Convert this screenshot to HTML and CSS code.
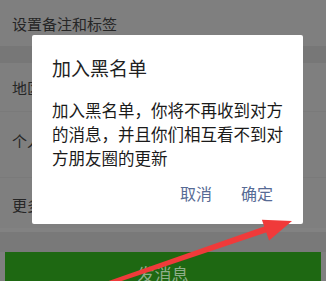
FILE: index.html
```html
<!DOCTYPE html>
<html lang="zh">
<head>
<meta charset="utf-8">
<link rel="stylesheet" href="styles.css">
</head>
<body>
<div class="screen">
  <div class="row row-top">设置备注和标签</div>
  <div class="band band-1"></div>
  <div class="row row-region">地区</div>
  <div class="row row-album">个人相册</div>
  <div class="row row-more">更多</div>
  <div class="band band-2"></div>
  <div class="send">发消息</div>

  <div class="dialog">
    <div class="dialog-title">加入黑名单</div>
    <div class="dialog-body">加入黑名单，你将不再收到对方的消息，并且你们相互看不到对方朋友圈的更新</div>
    <div class="dialog-actions">
      <span class="btn">取消</span>
      <span class="btn">确定</span>
    </div>
  </div>

  <svg class="arrow" viewBox="0 0 326 281" width="326" height="281">
    <polygon points="99.2,284.3 267.0,225.6 269.0,231.4 100.6,288.1" fill="#f03a3a"/>
    <polygon points="292,221 261.9,219.7 269.1,240.5" fill="#f03a3a"/>
  </svg>
</div>
</body>
</html>
```

FILE: styles.css
```css
html, body {
  margin: 0;
  padding: 0;
}
body {
  width: 326px;
  height: 281px;
  overflow: hidden;
  background: #7f7f7f;
  font-family: "Noto Sans CJK SC", "Noto Sans", sans-serif;
}
.screen {
  position: relative;
  width: 326px;
  height: 281px;
  overflow: hidden;
  display: flex;
  flex-direction: column;
  background: #7f7f7f;
}
.row {
  flex: none;
  padding-left: 12px;
  font-size: 15px;
  color: #262626;
  display: flex;
  align-items: center;
  box-sizing: border-box;
  border-bottom: 1px solid #7a7a7a;
}
.row-top {
  height: 46px;
  border-bottom: none;
}
.band {
  flex: none;
  background: #777777;
}
.band-1 {
  height: 17px;
}
.row-region {
  height: 49px;
  padding-top: 1px;
}
.row-album {
  height: 66px;
  align-items: flex-start;
  padding-top: 18px;
}
.row-more {
  height: 50px;
  padding-top: 2px;
  border-bottom: none;
}
.band-2 {
  height: 20px;
  background: #797979;
  border-top: 4px solid #828282;
}
.send {
  flex: none;
  margin: 0 5px;
  height: 40px;
  background: #1e6812;
  color: #8fae8a;
  font-size: 17px;
  display: flex;
  justify-content: center;
  align-items: flex-start;
  padding-top: 9px;
  box-sizing: border-box;
}
.dialog {
  position: absolute;
  left: 32px;
  top: 35px;
  width: 271px;
  height: 189px;
  background: #ffffff;
  border-radius: 2px;
  box-sizing: border-box;
  padding: 20px 30px 0 20px;
  display: flex;
  flex-direction: column;
}
.dialog-title {
  font-size: 19px;
  line-height: 26px;
  color: #222222;
}
.dialog-body {
  margin-top: 17px;
  font-size: 16.5px;
  line-height: 24px;
  color: #1a1a1a;
  margin-right: -12px;
}
.dialog-actions {
  margin-top: 12px;
  display: flex;
  justify-content: flex-end;
  gap: 29px;
}
.btn {
  font-size: 16px;
  line-height: 22px;
  color: #576b95;
}
.arrow {
  position: absolute;
  left: 0;
  top: 0;
}
```
